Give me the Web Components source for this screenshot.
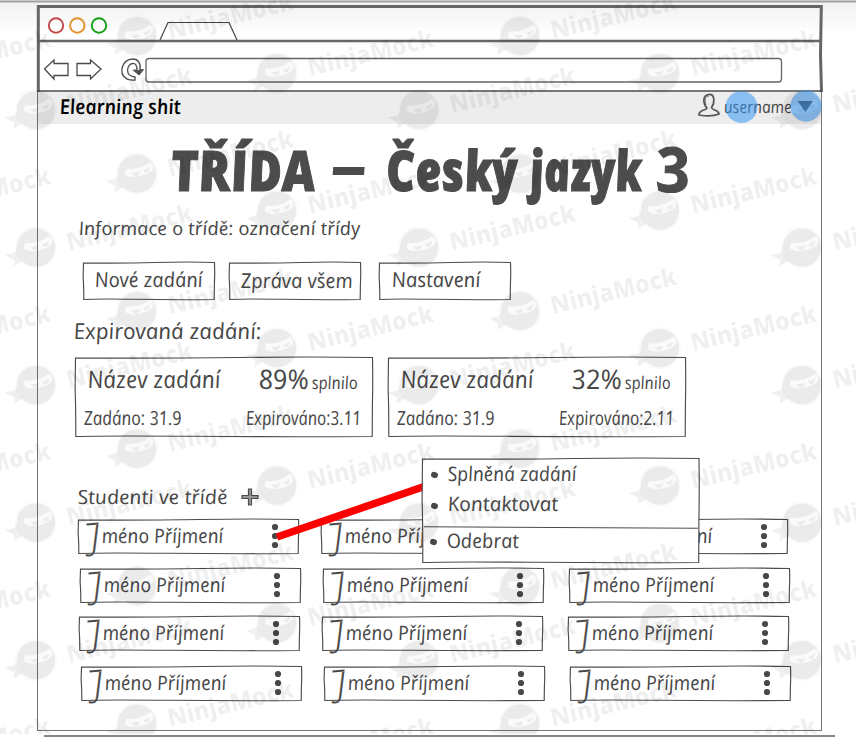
<!DOCTYPE html>
<html lang="cs">
<head>
<meta charset="utf-8">
<title>Třída</title>
<style>
html,body{margin:0;width:856px;height:737px;overflow:hidden;background:#fff;font-family:"Open Sans","Noto Sans",sans-serif;color:#484848}
</style>
</head>
<body>
<class-page></class-page>
<script>
function define(name, html, init) {
  const t = document.createElement('template');
  t.innerHTML = html;
  customElements.define(name, class extends HTMLElement {
    constructor() {
      super();
      this.attachShadow({mode: 'open'});
    }
    connectedCallback() {
      if (this.shadowRoot.childNodes.length) return;
      this.shadowRoot.append(t.content.cloneNode(true));
      if (init) init(this, this.shadowRoot);
    }
  });
}

/* A run of lettering squeezed to a given width; slanted letters are set upright. */
define('hand-text', `
<style>
:host{display:block;flex:none;white-space:nowrap}
span{display:inline-block;line-height:1;font-style:italic;transform-origin:0 88.8%;white-space:pre}
</style><span><slot></slot></span>`, (el, root) => {
  const s = root.querySelector('span');
  const size = +el.getAttribute('size'), w = +el.getAttribute('w');
  el.style.width = w + 'px';
  el.style.height = size + 'px';
  s.style.fontSize = size + 'px';
  s.style.fontWeight = el.getAttribute('weight') || 500;
  s.style.transform = `translateX(.5px) scaleX(${(w + 1) / s.offsetWidth}) skewX(9deg)`;
});

/* Container with a slightly uneven pen outline. */
define('sketch-box', `
<style>
:host{display:block;position:relative;flex:none;box-sizing:border-box}
svg{position:absolute;inset:0;overflow:visible}
div{position:relative}
</style><svg width="100%" height="100%"><path fill="none" stroke="#4c4c4c" stroke-width="1.15"/></svg><div><slot></slot></div>`, (el, root) => {
  const w = +el.getAttribute('w'), h = +el.getAttribute('h');
  el.style.width = w + 'px';
  el.style.height = h + 'px';
  root.querySelector('path').setAttribute('d',
    `M.5 1 Q${w * .3} 1.5 ${w * .55} .5 T${w - .5} .5 Q${w} ${h * .3} ${w - .6} ${h * .6} L${w - .8} ${h - .5} Q${w * .7} ${h} ${w * .4} ${h - .7} T.8 ${h - .5} Q.8 ${h * .6} .1 ${h * .4} Z`);
  if (el.hasAttribute('solid')) root.querySelector('path').setAttribute('fill', '#fff');
});

/* The initial is tall, with a flag at its top left. */
define('student-card', `
<style>
:host{display:block}
.row{display:flex;align-items:flex-start}
.name{display:flex;box-sizing:border-box;width:187px;padding:0 0 0 8px}
.j{position:relative;font:300 35px/35px "Open Sans",sans-serif;width:14px;height:35px;display:block;text-align:right;flex:none;transform:skewX(-7deg);transform-origin:50% 50%;-webkit-text-stroke:.3px #484848}
.j::before{content:"";position:absolute;left:-1px;top:4px;width:12px;height:2px;background:#484848;transform:rotate(-5deg)}
hand-text{margin:7px 0 0 1.500px}
svg{flex:none;margin-top:4px}
</style>
<sketch-box w="221" h="35"><div class="row"><div class="name"><span class="j">J</span><hand-text w="121" size="20">méno Příjmení</hand-text></div>
<svg width="20" height="28" fill="#484848"><circle cx="10" cy="4" r="3.100"/><circle cx="10" cy="13" r="3.100"/><circle cx="10" cy="22" r="3.100"/></svg></div></sketch-box>`);

define('task-card', `
<style>
:host{display:block}
.row{display:flex;height:40px}
</style>
<sketch-box w="298" h="80">
<div class="row"><hand-text w="132" size="24" style="margin:10px 0 0 12.500px"><slot name="title"></slot></hand-text><hand-text id="p" size="27"></hand-text><hand-text w="45" size="17.5" style="margin:15px 0 0 4px">splnilo</hand-text></div>
<div class="row"><hand-text w="97" size="19.5" style="margin:11px 0 0 9px"><slot name="set"></slot></hand-text><hand-text w="115" size="19.5" style="margin:11px 0 0 65px"><slot name="due"></slot></hand-text></div>
</sketch-box>`, (el, root) => {
  const old = root.getElementById('p');
  const p = document.createElement('hand-text');
  p.setAttribute('w', 49);
  p.setAttribute('size', 27);
  p.style.cssText = 'margin:8px 0 0 39.5px';
  p.textContent = el.getAttribute('percent');
  old.replaceWith(p);
});

define('browser-chrome', `
<style>:host{display:block;height:87px}svg{display:block;overflow:visible}</style>
<svg width="786" height="87" fill="none" stroke="#666">
<path stroke-width="3" d="M1.300 87V1.5H784.300L783.500 50L784.500 87"/><path stroke-width="2.500" d="M1.5 36H784"/>
<path stroke-width="1.6" stroke="#4a4a4a" d="M0 86H785"/>
<g stroke-width="1.9"><circle cx="19" cy="20.500" r="7.200" stroke="#c0484c"/><circle cx="40.300" cy="20.500" r="7.200" stroke="#e0902a"/><circle cx="62" cy="20.500" r="7.200" stroke="#12a012"/></g>
<path stroke="#444" stroke-width="1.2" d="M123 35L131 17.500H192L200 35"/>
<g stroke="#4a4a4a" stroke-width="1.3">
<path d="M7.500 64L17 55V58.500H31V70.500H17V74Z"/><path d="M64 64L53.500 55V58.500H40V70.500H53.500V74Z"/>
<path d="M98 75C88 76 84 70 85 63.500C86.500 57 91 54 96 54C101 54 104 58 103 64.500L106 65L102 69.500L97 65.500L100 65C100 60 98 58 95.500 58.500C90 59 87 71 98 72Z"/>
<path d="M103.500 65.500L102 68.500L99.500 66Z" fill="#4a4a4a"/>
<rect x="109" y="53.500" width="635.500" height="23.500" rx="3" stroke="#666"/>
</g></svg>`);

define('user-badge', `
<style>
:host{display:flex;position:relative;align-items:flex-start;height:32px;width:126px}
svg{flex:none}
.spots{position:absolute;left:26px;top:-2px}
</style>
<svg width="26" height="30" fill="none" stroke="#555" stroke-width="1.700"><path d="M1 23C1 17 8 19 9 16C5 12 4 3 11 2.500C17 2 17 11 13.500 15.500C14 19 20 17 21 22C15 24.500 7 24 1 23Z"/><path d="M8 13C6 8 7 4 11 4" stroke-width="1"/></svg>
<hand-text w="67" size="17" style="margin-top:4px">username</hand-text>
<svg class="spots" width="100" height="34"><path d="M73.500 11H89L81.500 22Z" fill="#4c4c4c"/><circle cx="17.500" cy="17" r="16" fill="#3797f5" fill-opacity=".55"/><circle cx="82" cy="16" r="15.700" fill="#3797f5" fill-opacity=".55"/></svg>`);

define('context-menu', `
<style>
:host{display:block}
.item{display:flex;height:30px}
.dot{width:7px;height:6px;border-radius:3px;background:#484848;flex:none;transform:rotate(12deg)}
.sep{height:1.2px;width:274px;margin:9px 0 0 2px;background:#4c4c4c;transform:rotate(.3deg)}
</style>
<sketch-box w="277.5" h="105" solid>
<div class="item"><i class="dot" style="margin:14px 0 0 9px"></i><hand-text w="128" size="20" style="margin:6px 0 0 10px">Splněná zadání</hand-text></div>
<div class="item"><i class="dot" style="margin:15px 0 0 9px"></i><hand-text w="110" size="20" style="margin:6px 0 0 10px">Kontaktovat</hand-text></div>
<div class="sep"></div>
<div class="item"><i class="dot" style="margin:11px 0 0 8px"></i><hand-text w="71" size="20" style="margin:3px 0 0 10px">Odebrat</hand-text></div>
</sketch-box>`);

/* Repeating logo layer: masked head followed by the product name. */
define('water-mark', `
<style>:host{position:absolute;left:0;top:0;width:856px;height:734px;overflow:hidden;pointer-events:none}
svg{display:block}text{font:800 25px "Open Sans",sans-serif}</style>
<svg width="856" height="734"></svg>`, (el, root) => {
  let out = '';
  for (const [x0, y0] of [[137, 37], [277, 74], [36, 111]])
    for (let x = x0 - 383; x < 900; x += 383)
      for (let y = y0 - 137.5; y < 790; y += 137.5)
        out += `<g transform="translate(${x} ${y - 1}) rotate(-13.500)" fill="#000" fill-opacity=".058">
<circle r="21" fill-opacity=".02"/>
<path fill-rule="evenodd" d="M-19 -3A19.200 19.200 0 1 1 -16.500 10L-26 13L-24 7L-32 0L-22 0Z M-12 -2C-8 5 13 5 17 -1C18 -5 17 -7 15 -8C8 -4.500 -3 -4.500 -10 -7Z"/>
<path d="M-5 -2.500Q1 0 3 -2Q3 2 -1 2.500Q-5 1 -5 -2.500ZM7 -2Q10 -1 14 -3.500Q13 1 10 1.500Q7 1 7 -2Z"/>
<text x="31" y="11" textLength="129" lengthAdjust="spacingAndGlyphs">NinjaMock</text></g>`;
  root.querySelector('svg').innerHTML = out;
});

define('class-page', `
<style>
:host{display:block;position:relative;width:856px;height:737px;overflow:hidden;background:linear-gradient(#c8cac8 0,#c8cac8 1px,#9da39f 1px,#9da39f 2px,#f1f1f1 3px,#fff 34px)}
main{width:786px;margin:0 0 0 37px;padding-top:5px}
.body{box-sizing:border-box;width:785px;height:639px;border:1.3px solid #777;border-top:0;background:#fff}
header{display:flex;height:32px;background:#ededed}
h1{display:flex;margin:0;height:81px;color:#4c4c4c;-webkit-text-stroke:1px #4c4c4c}
.row{display:flex;align-items:flex-start}
.students{display:flex;flex-direction:column}
.bottom{width:791px;height:2px;background:#858585;margin:4px 0 0 7px}
context-menu{position:absolute;left:422px;top:458px}
.link{position:absolute;left:0;top:0}
</style>
<main>
<browser-chrome></browser-chrome>
<div class="body">
<header><hand-text w="120" size="20.5" weight="600" style="color:#000;margin:4px 0 0 22px">Elearning shit</hand-text><user-badge style="margin-left:518px"></user-badge></header>
<h1>
<hand-text w="143" size="56" weight="800" style="margin:17px 0 0 135px">TŘÍDA</hand-text>
<hand-text w="33" size="52" weight="800" style="margin:15px 0 0 18px">–</hand-text>
<hand-text w="130" size="56" weight="800" style="margin:17px 0 0 21px">Český</hand-text>
<hand-text w="111" size="56" weight="800" style="margin:17px 0 0 13px">jazyk</hand-text>
<hand-text w="33" size="62" weight="700" style="margin:13px 0 0 16px">3</hand-text>
</h1>
<div class="row" style="height:45px"><hand-text w="281" size="18.5" style="margin:12.500px 0 0 41px">Informace o třídě: označení třídy</hand-text></div>
<div class="row" style="height:60px">
<sketch-box w="132" h="38" style="margin:12px 0 0 45px"><hand-text w="107" size="20.5" style="margin:7px 0 0 12px">Nové zadání</hand-text></sketch-box>
<sketch-box w="132" h="38" style="margin:11.500px 0 0 14px"><hand-text w="111" size="20.5" style="margin:8px 0 0 12px">Zpráva všem</hand-text></sketch-box>
<sketch-box w="132" h="38" style="margin:12px 0 0 18px"><hand-text w="88" size="20.5" style="margin:7px 0 0 13px">Nastavení</hand-text></sketch-box>
</div>
<div class="row" style="height:40px"><hand-text w="187" size="22" style="margin:9px 0 0 36px">Expirovaná zadání:</hand-text></div>
<div class="row" style="height:95px">
<task-card percent="89%" style="margin:7px 0 0 37px"><span slot="title">Název zadání</span><span slot="set">Zadáno: 31.9</span><span slot="due">Expirováno:3.11</span></task-card>
<task-card percent="32%" style="margin:7px 0 0 15px"><span slot="title">Název zadání</span><span slot="set">Zadáno: 31.9</span><span slot="due">Expirováno:2.11</span></task-card>
</div>
<div class="row" style="height:74px"><hand-text w="149" size="19.5" style="margin:42px 0 0 40px">Studenti ve třídě</hand-text>
<svg width="18" height="18" style="margin:43px 0 0 14px" fill="#999" stroke="#4c4c4c" stroke-width="1.200"><path d="M7.500 1H10.500V7.500H17V10.500H10.500V17H7.500V10.500H1V7.500H7.500Z"/></svg></div>
<div class="students"></div>
</div>
<div class="bottom"></div>
</main>
<svg class="link" width="856" height="737"><path d="M277 537L430 484.500" stroke="#f00" stroke-width="7.500"/></svg>
<context-menu></context-menu>
<water-mark></water-mark>`, (el, root) => {
  const list = root.querySelector('.students');
  for (const [pad, height] of [[40, 49], [42, 48], [41, 50], [43, 36]]) {
    const row = document.createElement('div');
    row.className = 'row';
    row.style.cssText = `height:${height}px;padding-left:${pad}px;gap:22px`;
    for (let i = 0; i < 3; i++) {
      const c = document.createElement('student-card');
      if (i === 2) c.style.marginLeft = '3px';
      row.append(c);
    }
    list.append(row);
  }
});
</script>
</body>
</html>
